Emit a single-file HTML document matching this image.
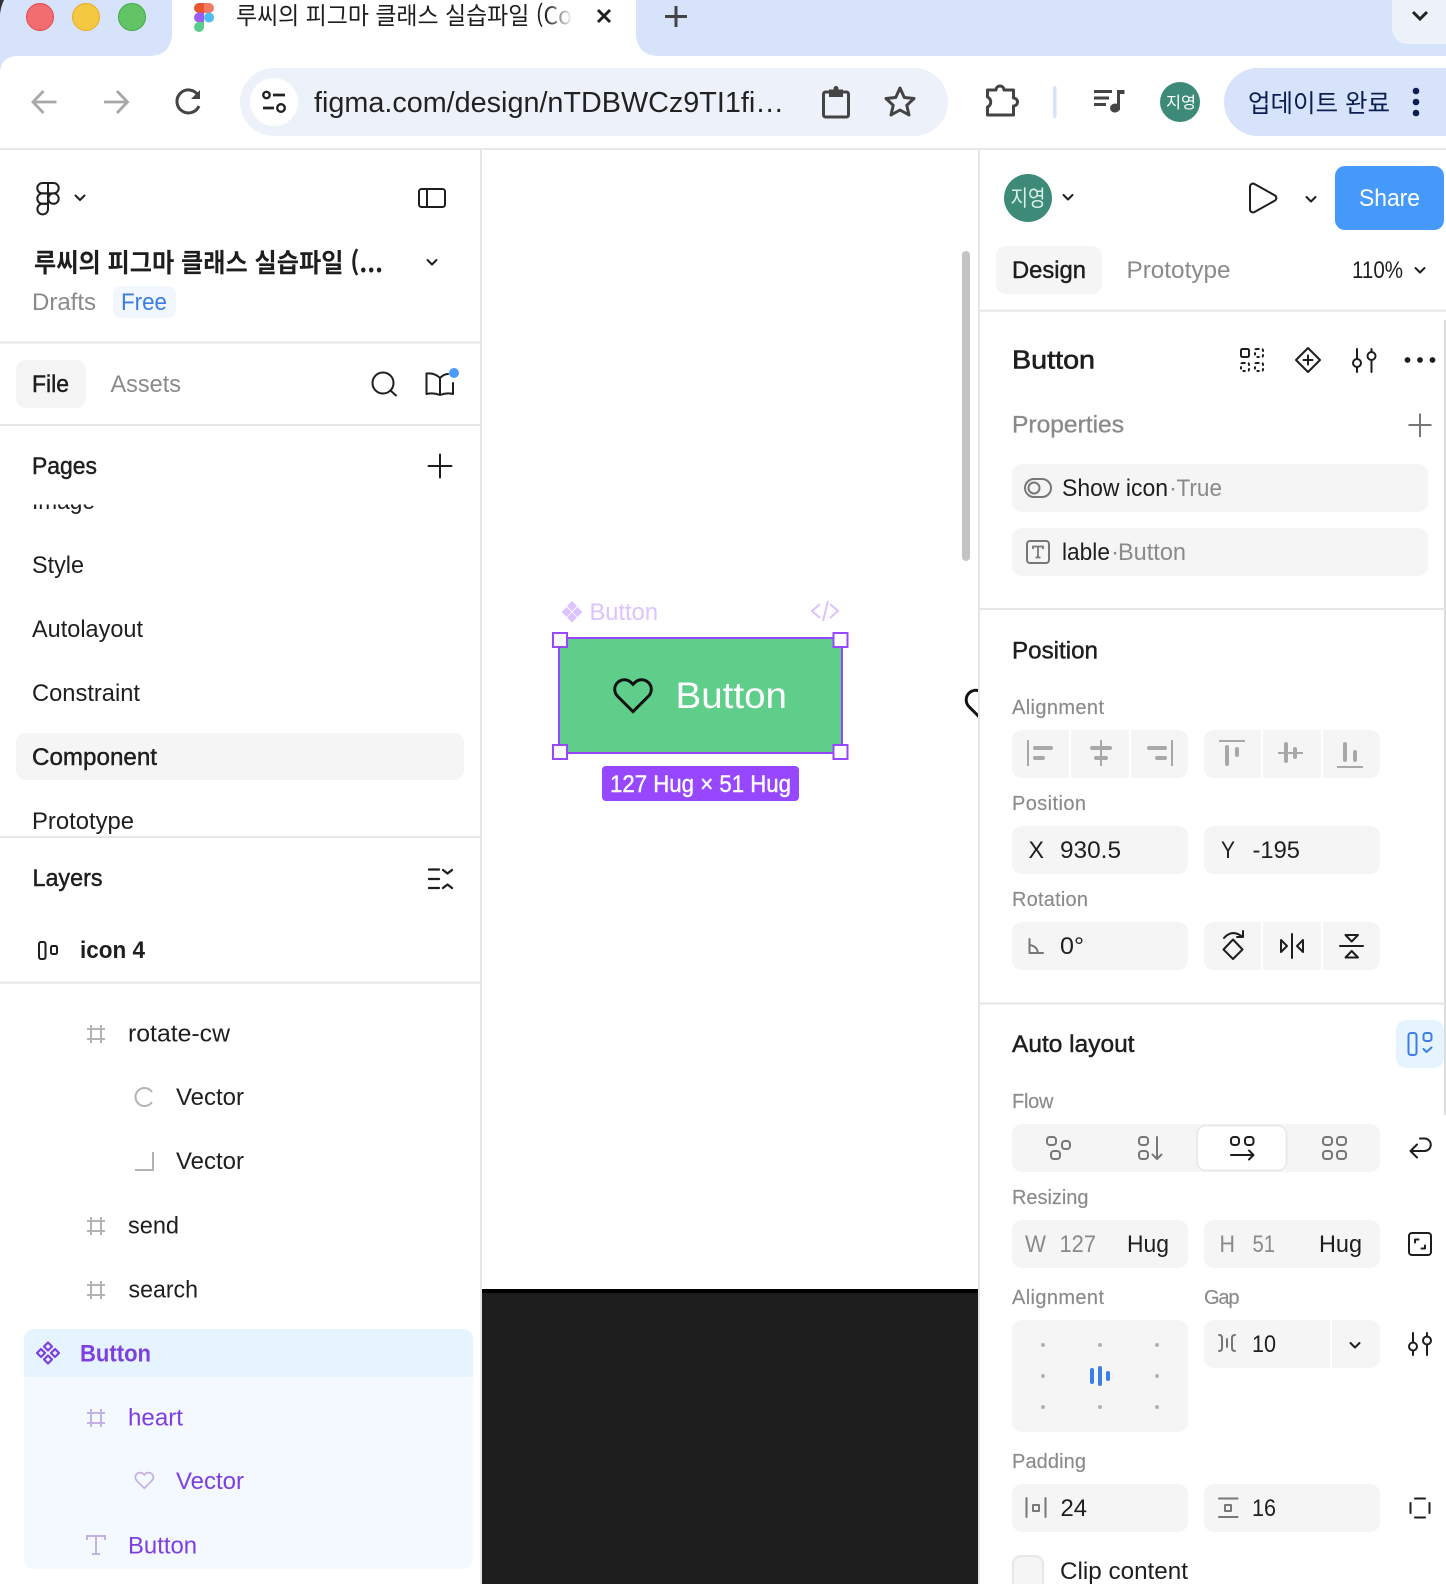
<!DOCTYPE html>
<html lang="ko">
<head>
<meta charset="utf-8">
<title>Figma recreation</title>
<style>
html,body{margin:0;padding:0;background:#fff;width:1446px;height:1584px;overflow:hidden}
svg{display:block}
text{font-family:"Liberation Sans","Noto Sans CJK KR",sans-serif;font-size:24px;fill:#1e1e1e;white-space:pre}
.k{font-family:"Noto Sans CJK KR","Liberation Sans",sans-serif}
.m{stroke:#1e1e1e;stroke-width:.45px}
.g{fill:#8a8a8a}
.gm{fill:#8a8a8a;stroke:#8a8a8a;stroke-width:.35px}
.l{font-size:20px;fill:#8a8a8a;stroke:#8a8a8a;stroke-width:.15px}
.p{fill:#7c3fe0}
.s{fill:none;stroke:#1e1e1e;stroke-width:2;stroke-linecap:round;stroke-linejoin:round}
.ga{fill:none;stroke:#777;stroke-width:2;stroke-linejoin:round;stroke-linecap:round}
.lg{fill:none;stroke:#b3b3b3;stroke-width:2}
.lp{fill:none;stroke:#c4b2e2;stroke-width:2}
.c{fill:none;stroke:#444;stroke-width:3;stroke-linejoin:round;stroke-linecap:round}
.b{fill:#f5f5f5}
.ln{fill:#e6e6e6}
.ai{fill:#a8a8a8}
</style>
</head>
<body>
<svg width="1446" height="1584" viewBox="0 0 1446 1584" xmlns="http://www.w3.org/2000/svg">
<rect width="1446" height="1584" fill="#fff"/>

<!-- browser tab strip -->
<path d="M0 0H172V32Q172 56 148 56H18Q0 56 0 74Z" fill="#d6e3fa"/>
<path d="M636 0H1446V56H660Q636 56 636 32Z" fill="#d6e3fa"/>
<path d="M0 0H4Q1 6 0 14Z" fill="#333"/>
<circle cx="40" cy="17" r="13.5" fill="#f26d6f" stroke="#e5484d" stroke-width="1"/>
<circle cx="86" cy="17" r="13.5" fill="#f5c842" stroke="#e6ac22" stroke-width="1"/>
<circle cx="132" cy="17" r="13.5" fill="#62c464" stroke="#3eaa46" stroke-width="1"/>
<!-- figma favicon -->
<path d="M204 3h-5a5 5 0 0 0 0 10h5z" fill="#e8552f"/>
<path d="M204 3h5a5 5 0 0 1 0 10h-5z" fill="#f47a63"/>
<path d="M204 12.500h-5a5 5 0 0 0 0 10h5z" fill="#9c5df5"/>
<circle cx="209" cy="17.500" r="5" fill="#4dbbf5"/>
<path d="M199 22h5v5a5 5 0 1 1-5-5z" fill="#58cd8c"/>
<text class="k" x="236" y="24" style="font-size:24px" textLength="336" lengthAdjust="spacingAndGlyphs">루씨의 피그마 클래스 실습파일 (Co</text>
<defs><linearGradient id="f" x1="0" x2="1" y1="0" y2="0"><stop offset="0" stop-color="#fff" stop-opacity="0"/><stop offset="1" stop-color="#fff"/></linearGradient></defs>
<rect x="545" y="2" width="28" height="30" fill="url(#f)"/>
<path d="M598 10L610 22M610 10L598 22" fill="none" stroke="#222" stroke-width="3"/>
<path d="M665 16.500H687M676 6V27" fill="none" stroke="#444" stroke-width="3"/>
<path d="M1392 0H1446V44H1410Q1392 44 1392 26Z" fill="#edf2fa"/>
<path d="M1413 12L1420 19L1427 12" fill="none" stroke="#222" stroke-width="3"/>

<!-- toolbar -->
<path d="M56.500 102H33.500M43.500 91L33 102L43.500 113" fill="none" stroke="#a8a8a8" stroke-width="2.800"/>
<path d="M127 102H104M117 91L127.500 102L117 113" fill="none" stroke="#a8a8a8" stroke-width="2.800"/>
<path d="M198 95A11.500 11.500 0 1 0 199 106" fill="none" stroke="#444" stroke-width="3"/>
<path d="M200 90V99H191Z" fill="#444"/>
<rect x="240" y="68" width="708" height="68" rx="34" fill="#edf2fa"/>
<circle cx="274" cy="102" r="24" fill="#fff"/>
<circle cx="266.500" cy="95" r="3.200" fill="none" stroke="#222" stroke-width="2.400"/>
<path d="M273 95H285M263 108H274" stroke="#222" stroke-width="2.800" fill="none"/>
<circle cx="281" cy="108" r="3.800" fill="none" stroke="#222" stroke-width="2.400"/>
<text x="314" y="112" style="font-size:29px;fill:#222" textLength="470" lengthAdjust="spacingAndGlyphs">figma.com/design/nTDBWCz9TI1fi…</text>
<rect x="823.500" y="92" width="25" height="25" rx="2" class="c"/>
<path d="M829 89.500H843V97H829Z" fill="#444"/><circle cx="836" cy="88.500" r="2.500" fill="#444"/>
<path d="M900 88L904.300 97.500L914 98.500L906.800 105.300L909 115L900 110L891 115L893.200 105.300L886 98.500L895.700 97.500Z" class="c"/>
<path d="M987.500 90H996a4 4 0 0 1 8 0H1013.500V98a4 4 0 0 1 0 8V115H987.500V107a5.500 5.500 0 0 0 0-10Z" class="c"/>
<rect x="1053" y="86" width="3.500" height="32" rx="1.700" fill="#d6e3fa"/>
<path d="M1094 90h18v3h-18zM1094 96.500h15v3h-15zM1094 103h12v3h-12z" fill="#444"/>
<path d="M1117 90h7.500v4h-4.500v16h-3z" fill="#444"/><ellipse cx="1115" cy="108" rx="5" ry="4.500" fill="#444" transform="rotate(-10 1115 108)"/>
<ellipse cx="1180" cy="102" rx="20" ry="20" fill="#3d8a78"/>
<text class="k" x="1166" y="108" style="font-size:16px;fill:#fff" textLength="30" lengthAdjust="spacingAndGlyphs">지영</text>
<path d="M1258 68H1446V136H1258A34 34 0 0 1 1258 68Z" fill="#d6e3fa"/>
<text class="k" x="1248" y="112" style="font-size:25px;fill:#0a1e50" textLength="142" lengthAdjust="spacingAndGlyphs">업데이트 완료</text>
<circle cx="1416" cy="91" r="3.300" fill="#0a1e50"/><circle cx="1416" cy="102" r="3.300" fill="#0a1e50"/><circle cx="1416" cy="113" r="3.300" fill="#0a1e50"/>
<rect x="0" y="148" width="1446" height="2" class="ln"/>

<!-- left panel -->
<rect x="480" y="150" width="2" height="1434" class="ln"/>
<g class="s">
<path d="M48 183h-5.500a5.200 5.200 0 0 0 0 10.400H48z"/>
<path d="M48 183h5.500a5.200 5.200 0 0 1 0 10.400H48z"/>
<path d="M48 193.400h-5.500a5.200 5.200 0 0 0 0 10.400H48z"/>
<circle cx="53.500" cy="198.600" r="5.200"/>
<path d="M42.500 203.800H48v5a5.300 5.300 0 1 1-5.500-5z"/>
<path d="M75.500 195.500L80 200L84.500 195.500"/>
<rect x="419" y="189" width="26" height="18" rx="2.500"/>
<path d="M427 189V207"/>
<path d="M427.500 260L432 264.500L436.500 260"/>
</g>
<text class="k" x="34" y="272" style="font-size:26px;font-weight:700" textLength="349" lengthAdjust="spacingAndGlyphs">루씨의 피그마 클래스 실습파일 (...</text>
<text class="g" x="32" y="310" textLength="64" lengthAdjust="spacingAndGlyphs">Drafts</text>
<rect x="113" y="286" width="63" height="32" rx="8" fill="#f2f7fe"/>
<text x="121" y="310" style="fill:#3b7ee0" textLength="46" lengthAdjust="spacingAndGlyphs">Free</text>
<rect x="0" y="341.500" width="480" height="2" class="ln"/>
<rect x="16" y="360" width="70" height="48" rx="10" class="b"/>
<text class="m" x="32" y="392" textLength="37" lengthAdjust="spacingAndGlyphs">File</text>
<text class="g" x="110.500" y="392" textLength="70.500" lengthAdjust="spacingAndGlyphs">Assets</text>
<g class="s">
<circle cx="383" cy="383" r="10.500"/><path d="M391 391L396 395.500"/>
<path d="M440 378C436 374 431 373 426.500 373.500V394C431 393 436 393.500 440 395C444 393.500 449 393 453 394V383M440 378V395M440 378C442 376 445 374 448 374"/>
</g>
<circle cx="454" cy="373" r="5" fill="#4a9bfa"/>
<rect x="0" y="424" width="480" height="2" class="ln"/>
<text x="32" y="509" textLength="63" lengthAdjust="spacingAndGlyphs">Image</text>
<rect x="0" y="426" width="480" height="78.500" fill="#fff"/>
<text class="m" x="32" y="474" textLength="65" lengthAdjust="spacingAndGlyphs">Pages</text>
<path d="M428.500 466H451.500M440 454.500V477.500" class="s"/>
<text x="32" y="573" textLength="52" lengthAdjust="spacingAndGlyphs">Style</text>
<text x="32" y="637" textLength="111" lengthAdjust="spacingAndGlyphs">Autolayout</text>
<text x="32" y="701" textLength="108" lengthAdjust="spacingAndGlyphs">Constraint</text>
<rect x="16" y="733" width="448" height="47" rx="10" class="b"/>
<text class="m" x="32" y="765" textLength="125" lengthAdjust="spacingAndGlyphs">Component</text>
<text x="32" y="829" textLength="102" lengthAdjust="spacingAndGlyphs">Prototype</text>
<rect x="0" y="836" width="480" height="2" class="ln"/>
<text class="m" x="32.500" y="886" textLength="70" lengthAdjust="spacingAndGlyphs">Layers</text>
<path d="M429 869.500H439M429 879H439M429 888H439M443 870L447.500 873.500L452 870M443 888L447.500 884.500L452 888" class="s" style="stroke-width:2.300"/>
<rect x="39" y="942" width="6.500" height="17" rx="2" class="s"/>
<rect x="51" y="946" width="6" height="8" rx="1.500" class="s"/>
<text x="80" y="958" style="font-weight:700" textLength="65" lengthAdjust="spacingAndGlyphs">icon 4</text>
<rect x="0" y="981.700" width="480" height="2" class="ln"/>

<path class="lg" d="M91 1025V1043M101 1025V1043M87 1029H105M87 1039H105"/>
<text x="128" y="1041.500" textLength="102" lengthAdjust="spacingAndGlyphs">rotate-cw</text>
<path class="lg" d="M152 1092A9 9 0 1 0 152 1102"/>
<text x="176" y="1105" textLength="68" lengthAdjust="spacingAndGlyphs">Vector</text>
<path class="lg" d="M135 1170H153V1152"/>
<text x="176" y="1169" textLength="68" lengthAdjust="spacingAndGlyphs">Vector</text>
<path class="lg" d="M91 1217V1235M101 1217V1235M87 1221H105M87 1231H105"/>
<text x="128" y="1233.500" textLength="51" lengthAdjust="spacingAndGlyphs">send</text>
<path class="lg" d="M91 1281V1299M101 1281V1299M87 1285H105M87 1295H105"/>
<text x="128.500" y="1297.500" textLength="69.500" lengthAdjust="spacingAndGlyphs">search</text>

<path d="M24 1339a10 10 0 0 1 10-10H463a10 10 0 0 1 10 10V1377H24Z" fill="#e5f4ff"/>
<path d="M24 1377H473V1559a10 10 0 0 1-10 10H34a10 10 0 0 1-10-10Z" fill="#f4f9ff"/>
<g fill="none" stroke="#7c3fe0" stroke-width="2.200" stroke-linejoin="round">
<path d="M48 1342.500l4 4-4 4-4-4z"/><path d="M48 1355.500l4 4-4 4-4-4z"/>
<path d="M41 1349l4 4-4 4-4-4z"/><path d="M55 1349l4 4-4 4-4-4z"/>
</g>
<text class="p" x="80" y="1361.500" style="font-weight:700" textLength="71" lengthAdjust="spacingAndGlyphs">Button</text>
<path class="lp" d="M91 1409V1427M101 1409V1427M87 1413H105M87 1423H105"/>
<text class="p" x="128" y="1425.500" textLength="55" lengthAdjust="spacingAndGlyphs">heart</text>
<path class="lp" transform="translate(134 1470) scale(.86)" stroke-width="2.300" d="M20.840 4.610a5.500 5.500 0 0 0-7.780 0L12 5.670l-1.060-1.060a5.500 5.500 0 0 0-7.780 7.780l1.060 1.060L12 21.230l7.780-7.780 1.060-1.060a5.500 5.500 0 0 0 0-7.780z"/>
<text class="p" x="176" y="1489" textLength="68" lengthAdjust="spacingAndGlyphs">Vector</text>
<path class="lp" d="M87 1540V1536H105V1540M96 1536V1554M92 1554H100"/>
<text class="p" x="128" y="1553.500" textLength="69" lengthAdjust="spacingAndGlyphs">Button</text>

<!-- canvas -->
<rect x="482" y="1289" width="496" height="295" fill="#1e1e1e"/>
<rect x="482" y="1289" width="496" height="4" fill="#000"/>
<rect x="962" y="251" width="8" height="310" rx="4" fill="#c4c4c4"/>
<path fill="none" stroke="#111" stroke-width="1.700" transform="translate(963.500 685) scale(1.75)" d="M20.840 4.610a5.500 5.500 0 0 0-7.780 0L12 5.670l-1.060-1.060a5.500 5.500 0 0 0-7.780 7.780l1.060 1.060L12 21.230l7.780-7.780 1.060-1.060a5.500 5.500 0 0 0 0-7.780z"/>

<g fill="#dcc3ff">
<path d="M572 601l5 5-5 5-5-5z"/><path d="M572 612.500l5 5-5 5-5-5z"/>
<path d="M566.500 607l5 5-5 5-5-5z"/><path d="M577.500 607l5 5-5 5-5-5z"/>
</g>
<text x="589.500" y="620" style="fill:#dcc3ff" textLength="68.500" lengthAdjust="spacingAndGlyphs">Button</text>
<path d="M820 604L812 611L820 618M823 621L828 601M830 604L838 611L830 618" fill="none" stroke="#dcc3ff" stroke-width="2"/>
<rect x="559" y="638" width="283" height="115" rx="14" fill="#5fce8a"/>
<rect x="559" y="638" width="283" height="115" fill="none" stroke="#9747ff" stroke-width="2"/>
<g fill="#fff" stroke="#9747ff" stroke-width="2">
<rect x="553" y="633" width="14" height="14"/><rect x="833.500" y="633" width="14" height="14"/>
<rect x="553" y="745" width="14" height="14"/><rect x="833.500" y="745" width="14" height="14"/>
</g>
<path fill="none" stroke="#111" stroke-width="1.700" transform="translate(612 674.500) scale(1.75)" d="M20.840 4.610a5.500 5.500 0 0 0-7.780 0L12 5.670l-1.060-1.060a5.500 5.500 0 0 0-7.780 7.780l1.060 1.060L12 21.230l7.780-7.780 1.060-1.060a5.500 5.500 0 0 0 0-7.780z"/>
<text x="675.500" y="708" style="font-size:37px;fill:#fff" textLength="111.500" lengthAdjust="spacingAndGlyphs">Button</text>
<rect x="602" y="766" width="197" height="35" rx="4" fill="#9747ff"/>
<text x="610" y="792" style="fill:#fff;stroke:#fff;stroke-width:.4px" textLength="181" lengthAdjust="spacingAndGlyphs">127 Hug × 51 Hug</text>

<!-- right panel -->
<rect x="978" y="150" width="468" height="1434" fill="#fff"/>
<rect x="978" y="150" width="2" height="1434" class="ln"/>
<rect x="1444" y="320" width="2" height="795" fill="#ddd"/>
<circle cx="1028" cy="198" r="24" fill="#3d8a78"/>
<text class="k" x="1010.500" y="206" style="font-size:22px;fill:#d9f0ea" textLength="35" lengthAdjust="spacingAndGlyphs">지영</text>
<g class="s">
<path d="M1063.500 195L1068 199.500L1072.500 195"/>
<path d="M1250 186.500a3 3 0 0 1 4.500-2.500L1275 195.500a3 3 0 0 1 0 5L1254.500 212a3 3 0 0 1-4.500-2.500Z"/>
<path d="M1306.500 197L1311 201.500L1315.500 197"/>
<path d="M1415.500 268L1420 272.500L1424.500 268"/>
</g>
<rect x="1335" y="166" width="109" height="64" rx="10" fill="#4499fb"/>
<text x="1359" y="206" style="fill:#fff" textLength="61" lengthAdjust="spacingAndGlyphs">Share</text>
<rect x="996" y="246" width="106" height="48" rx="10" class="b"/>
<text class="m" x="1012" y="278" textLength="74" lengthAdjust="spacingAndGlyphs">Design</text>
<text class="g" x="1126.500" y="278" textLength="104" lengthAdjust="spacingAndGlyphs">Prototype</text>
<text x="1352" y="278" textLength="51" lengthAdjust="spacingAndGlyphs">110%</text>
<rect x="980" y="309.700" width="466" height="2" class="ln"/>

<text class="m" x="1012" y="368.500" style="font-size:26px;stroke-width:.6px" textLength="83" lengthAdjust="spacingAndGlyphs">Button</text>
<rect x="1241" y="349" width="8" height="8" rx="1.500" class="s"/>
<g class="s" style="stroke-dasharray:3 2.500;stroke-linecap:butt"><rect x="1255" y="349" width="8" height="8" rx="1.500"/><rect x="1241" y="363" width="8" height="8" rx="1.500"/><rect x="1255" y="363" width="8" height="8" rx="1.500"/></g>
<g class="s">
<path d="M1308 348L1320 360L1308 372L1296 360Z"/><path d="M1303.500 360H1312.500M1308 355.500V364.500"/>
<path d="M1357 349V359M1357 367V372M1371.500 349V352M1371.500 360V372"/>
<circle cx="1357" cy="363" r="4"/><circle cx="1371.500" cy="356" r="4"/>
</g>
<circle cx="1407.500" cy="360" r="2.900" fill="#1e1e1e"/><circle cx="1420" cy="360" r="2.900" fill="#1e1e1e"/><circle cx="1432.500" cy="360" r="2.900" fill="#1e1e1e"/>
<text class="gm" x="1012" y="432.500" textLength="112" lengthAdjust="spacingAndGlyphs">Properties</text>
<path d="M1408.500 425H1431.500M1420 413.500V437" fill="none" stroke="#777" stroke-width="2"/>

<rect x="1012" y="464" width="416" height="48" rx="10" class="b"/>
<rect x="1025" y="479" width="26" height="18" rx="9" class="ga"/><circle cx="1034" cy="488" r="5.500" class="ga"/>
<text x="1062" y="496" textLength="106" lengthAdjust="spacingAndGlyphs">Show icon</text>
<text class="g" x="1169" y="496">·</text>
<text class="g" x="1176.500" y="496" textLength="45.500" lengthAdjust="spacingAndGlyphs">True</text>
<rect x="1012" y="528" width="416" height="48" rx="10" class="b"/>
<rect x="1027" y="541" width="22" height="22" rx="3" class="ga"/><path d="M1033 549V546.500H1043V549M1038 546.500V557.500M1035.500 557.500H1040.500" fill="none" stroke="#777" stroke-width="1.800"/>
<text x="1062" y="560" textLength="48" lengthAdjust="spacingAndGlyphs">lable</text>
<text class="g" x="1111" y="560">·</text>
<text class="g" x="1118" y="560" textLength="68" lengthAdjust="spacingAndGlyphs">Button</text>
<rect x="980" y="608" width="466" height="2" class="ln"/>

<text class="m" x="1012" y="658.500" textLength="86" lengthAdjust="spacingAndGlyphs">Position</text>
<text class="l" x="1012" y="714" textLength="92">Alignment</text>
<rect x="1012" y="730" width="176" height="48" rx="10" class="b"/>
<rect x="1204" y="730" width="176" height="48" rx="10" class="b"/>
<rect x="1069" y="730" width="2" height="48" fill="#fff"/><rect x="1129" y="730" width="2" height="48" fill="#fff"/>
<rect x="1261" y="730" width="2" height="48" fill="#fff"/><rect x="1321" y="730" width="2" height="48" fill="#fff"/>
<g class="ai">
<rect x="1027" y="740" width="2" height="26"/><rect x="1033" y="746" width="20" height="4" rx="2"/><rect x="1033" y="756" width="12" height="4" rx="2"/>
<rect x="1100" y="740" width="2" height="26"/><rect x="1090" y="746" width="22" height="4" rx="2"/><rect x="1094" y="756" width="14" height="4" rx="2"/>
<rect x="1171" y="740" width="2" height="26"/><rect x="1147" y="746" width="20" height="4" rx="2"/><rect x="1155" y="756" width="12" height="4" rx="2"/>
<rect x="1219" y="740" width="26" height="2"/><rect x="1225" y="745" width="4" height="21" rx="2"/><rect x="1235" y="747" width="4" height="10" rx="2"/>
<rect x="1278" y="752" width="25" height="2"/><rect x="1284" y="742" width="4" height="21" rx="2"/><rect x="1293" y="747" width="4" height="12" rx="2"/>
<rect x="1337" y="766" width="26" height="2"/><rect x="1343" y="742" width="4" height="20" rx="2"/><rect x="1353" y="750" width="4" height="12" rx="2"/>
</g>
<text class="l" x="1012" y="810" textLength="74">Position</text>
<rect x="1012" y="826" width="176" height="48" rx="10" class="b"/>
<rect x="1204" y="826" width="176" height="48" rx="10" class="b"/>
<text x="1028.500" y="858" textLength="15.500" lengthAdjust="spacingAndGlyphs">X</text>
<text x="1060" y="858" textLength="61" lengthAdjust="spacingAndGlyphs">930.5</text>
<text x="1221" y="858" textLength="14" lengthAdjust="spacingAndGlyphs">Y</text>
<text x="1252.500" y="858" textLength="47.500" lengthAdjust="spacingAndGlyphs">-195</text>
<text class="l" x="1012" y="906" textLength="76">Rotation</text>
<rect x="1012" y="922" width="176" height="48" rx="10" class="b"/>
<rect x="1204" y="922" width="176" height="48" rx="10" class="b"/>
<rect x="1261" y="922" width="2" height="48" fill="#fff"/><rect x="1321" y="922" width="2" height="48" fill="#fff"/>
<path d="M1029.500 939V953H1043M1029.500 945Q1037 946 1038 953" class="ga"/>
<text x="1060" y="954" textLength="24" lengthAdjust="spacingAndGlyphs">0°</text>
<g class="s">
<path d="M1233 939.500L1242.500 949.500L1233 959L1223.500 949.500Z"/>
<path d="M1224 938Q1232 929 1242 936.500M1243 931V937H1237"/>
<path d="M1292 934V958M1281 940L1287 946L1281 952ZM1303 940L1297 946L1303 952Z"/>
<path d="M1340 946H1363M1345.500 935H1358L1351.700 941.500ZM1345.500 957.500H1358L1351.700 951Z"/>
</g>
<rect x="980" y="1002.500" width="466" height="2" class="ln"/>

<text class="m" x="1012" y="1052" textLength="122.500" lengthAdjust="spacingAndGlyphs">Auto layout</text>
<rect x="1396" y="1020" width="48" height="48" rx="10" fill="#e5f4ff"/>
<g fill="none" stroke="#3b7ee6" stroke-width="2" stroke-linejoin="round" stroke-linecap="round">
<rect x="1408.500" y="1033" width="8" height="22" rx="2.500"/>
<rect x="1423.500" y="1033" width="8" height="8" rx="2.500"/>
<path d="M1423.500 1049L1426.500 1052L1431.500 1047.500"/>
</g>
<text class="l" x="1012" y="1108" textLength="41.500">Flow</text>
<rect x="1012" y="1124" width="368" height="48" rx="10" class="b"/>
<rect x="1197" y="1125.500" width="89.500" height="45" rx="9" fill="#fff" stroke="#e6e6e6" stroke-width="1.500"/>
<g class="ga">
<rect x="1047" y="1137" width="9" height="8" rx="3"/><rect x="1062" y="1141" width="8" height="8" rx="3"/><rect x="1051" y="1151" width="9" height="8" rx="3"/>
<rect x="1139" y="1137" width="9" height="8" rx="3"/><rect x="1139" y="1151" width="9" height="8" rx="3"/><path d="M1157 1137V1159M1152.500 1154.500L1157 1159L1161.500 1154.500"/>
<rect x="1323" y="1137" width="9" height="8" rx="3"/><rect x="1337" y="1137" width="9" height="8" rx="3"/><rect x="1323" y="1151" width="9" height="8" rx="3"/><rect x="1337" y="1151" width="9" height="8" rx="3"/>
</g>
<g class="s">
<rect x="1231" y="1137" width="8" height="8" rx="3"/><rect x="1245" y="1137" width="8.500" height="8" rx="3"/>
<path d="M1231 1155H1253M1249 1150.500L1253.500 1155L1249 1159.500"/>
<path d="M1420 1138.500H1424.500a6.200 6.200 0 0 1 0 12.500H1411M1417 1144.500L1410.500 1151L1417 1157.500"/>
<rect x="1409" y="1233" width="22" height="22" rx="3"/>
<path d="M1415 1242.500V1239.500H1418.500M1425 1245.500V1248.500H1421.500"/>
</g>
<text class="l" x="1012" y="1204" textLength="76.500">Resizing</text>
<rect x="1012" y="1220" width="176" height="48" rx="10" class="b"/>
<rect x="1204" y="1220" width="176" height="48" rx="10" class="b"/>
<text class="g" x="1025" y="1252" textLength="21" lengthAdjust="spacingAndGlyphs">W</text>
<text class="g" x="1059.500" y="1252" textLength="36.500" lengthAdjust="spacingAndGlyphs">127</text>
<text x="1127" y="1252" textLength="42" lengthAdjust="spacingAndGlyphs">Hug</text>
<text class="g" x="1219.500" y="1252" textLength="15.500" lengthAdjust="spacingAndGlyphs">H</text>
<text class="g" x="1252.500" y="1252" textLength="22.500" lengthAdjust="spacingAndGlyphs">51</text>
<text x="1319" y="1252" textLength="43" lengthAdjust="spacingAndGlyphs">Hug</text>

<text class="l" x="1012" y="1304" textLength="92">Alignment</text>
<text class="l" x="1204" y="1304" textLength="35.500">Gap</text>
<rect x="1012" y="1320" width="176" height="112" rx="10" class="b"/>
<g fill="#b3b3b3">
<circle cx="1043" cy="1345" r="2"/><circle cx="1100" cy="1345" r="2"/><circle cx="1157" cy="1345" r="2"/>
<circle cx="1043" cy="1376" r="2"/><circle cx="1157" cy="1376" r="2"/>
<circle cx="1043" cy="1407" r="2"/><circle cx="1100" cy="1407" r="2"/><circle cx="1157" cy="1407" r="2"/>
</g>
<g fill="#3b7ee6">
<rect x="1090" y="1368" width="4" height="16" rx="2"/><rect x="1098" y="1366" width="4" height="20" rx="2"/><rect x="1106" y="1371" width="4" height="10" rx="2"/>
</g>
<rect x="1204" y="1320" width="176" height="48" rx="10" class="b"/>
<rect x="1330" y="1320" width="2" height="48" fill="#fff"/>
<path d="M1219 1335q3 0 3 3v10q0 3-3 3M1235 1335q-3 0-3 3v10q0 3 3 3M1227 1339v8" class="ga"/>
<text x="1252" y="1352" textLength="24" lengthAdjust="spacingAndGlyphs">10</text>
<g class="s">
<path d="M1350.500 1343L1355 1347.500L1359.500 1343"/>
<path d="M1413 1333V1342M1413 1351V1355M1427 1333V1336M1427 1345V1355"/>
<circle cx="1413" cy="1346.500" r="4"/><circle cx="1427" cy="1340.500" r="4"/>
</g>
<text class="l" x="1012" y="1468" textLength="74">Padding</text>
<rect x="1012" y="1484" width="176" height="48" rx="10" class="b"/>
<rect x="1204" y="1484" width="176" height="48" rx="10" class="b"/>
<path d="M1026.500 1498V1517M1045.500 1498V1517M1219 1498.500H1237.500M1219 1517H1237.500" class="ga"/>
<rect x="1033" y="1505" width="6" height="6" class="ga"/>
<rect x="1225" y="1505" width="6" height="6" class="ga"/>
<text x="1060.500" y="1516" textLength="26.500" lengthAdjust="spacingAndGlyphs">24</text>
<text x="1252" y="1516" textLength="24" lengthAdjust="spacingAndGlyphs">16</text>
<path d="M1415 1498.500H1425M1415 1517.500H1425M1410.500 1503V1513M1429.500 1503V1513" class="s"/>
<rect x="1013" y="1556" width="30" height="36" rx="8" fill="#f5f5f5" stroke="#e6e6e6" stroke-width="2"/>
<text x="1060" y="1579" textLength="128" lengthAdjust="spacingAndGlyphs">Clip content</text>
</svg>
</body>
</html>
